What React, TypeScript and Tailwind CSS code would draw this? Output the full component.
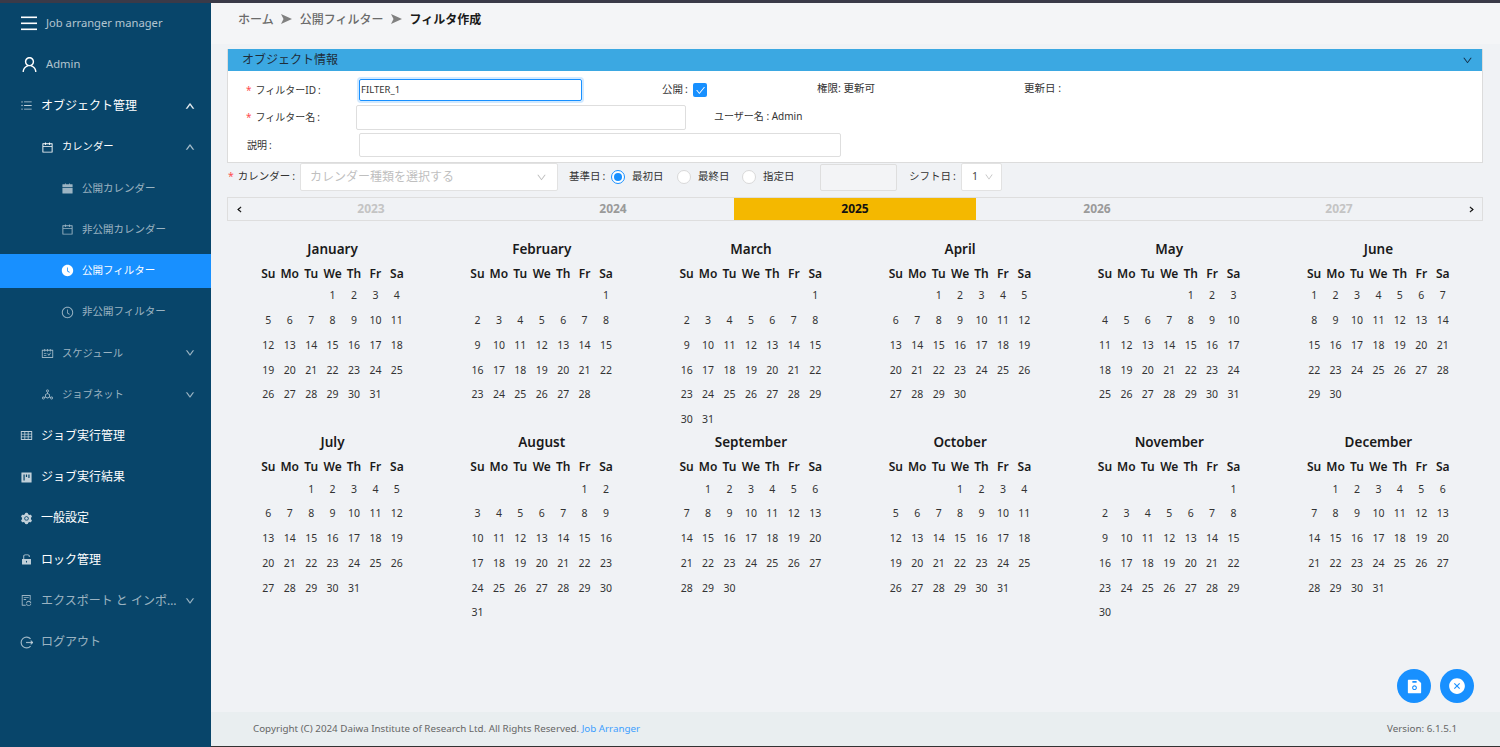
import React from "react";
import {
  AiOutlineUser, AiOutlineUnorderedList, AiOutlineCalendar, AiFillCalendar,
  AiFillClockCircle, AiOutlineClockCircle, AiOutlineSchedule, AiOutlineDeploymentUnit, AiOutlineTable,
  AiFillProject, AiFillSetting, AiFillUnlock, AiOutlineFileSync, AiOutlineUp, AiOutlineDown,
  AiFillSave, AiFillCloseCircle, AiOutlineCheck, AiOutlineLeft, AiOutlineRight,
} from "react-icons/ai";

const font = { fontFamily: '"Noto Sans", "Noto Sans CJK JP", sans-serif' };

function LogoutIcon({ className }: { className?: string }) {
  return (
    <svg viewBox="0 0 14 14" className={className} fill="none" stroke="currentColor" strokeWidth="1.3">
      <path d="M11.4 3.2 A5.8 5.8 0 1 0 11.4 10.8" />
      <path d="M6.5 7 H13.5" />
      <path d="M11.5 5 L13.5 7 L11.5 9" />
    </svg>
  );
}

type Item = {
  label: string; Icon: React.ComponentType<{ className?: string }>; level: 0 | 1 | 2;
  bright?: boolean; active?: boolean; chevron?: "up" | "down"; chevBright?: boolean;
};

const items: Item[] = [
  { label: "オブジェクト管理", Icon: AiOutlineUnorderedList, level: 0, bright: true, chevron: "up", chevBright: true },
  { label: "カレンダー", Icon: AiOutlineCalendar, level: 1, bright: true, chevron: "up" },
  { label: "公開カレンダー", Icon: AiFillCalendar, level: 2 },
  { label: "非公開カレンダー", Icon: AiOutlineCalendar, level: 2 },
  { label: "公開フィルター", Icon: AiFillClockCircle, level: 2, active: true, bright: true },
  { label: "非公開フィルター", Icon: AiOutlineClockCircle, level: 2 },
  { label: "スケジュール", Icon: AiOutlineSchedule, level: 1, chevron: "down" },
  { label: "ジョブネット", Icon: AiOutlineDeploymentUnit, level: 1, chevron: "down" },
  { label: "ジョブ実行管理", Icon: AiOutlineTable, level: 0, bright: true },
  { label: "ジョブ実行結果", Icon: AiFillProject, level: 0, bright: true },
  { label: "一般設定", Icon: AiFillSetting, level: 0, bright: true },
  { label: "ロック管理", Icon: AiFillUnlock, level: 0, bright: true },
  { label: "エクスポート と インポート", Icon: AiOutlineFileSync, level: 0, chevron: "down" },
  { label: "ログアウト", Icon: LogoutIcon, level: 0 },
];

function SideRow({ it }: { it: Item }) {
  const pad = it.level === 0 ? "pl-[20px]" : it.level === 1 ? "pl-[41px]" : "pl-[61px]";
  const size = it.level === 0 ? "text-[12px]" : it.level === 1 ? "text-[10.3px]" : "text-[10.5px]";
  const color = it.bright ? "text-white" : "text-white/60";
  return (
    <div className="h-[41.25px] flex items-center">
      <div className={`h-[34px] w-full flex items-center gap-[8px] pr-[16px] ${pad} ${it.active ? "bg-[#1890ff]" : ""}`}>
        <it.Icon className={`w-[13px] h-[13px] shrink-0 ${it.level === 0 && it.bright ? "text-white/75" : color}`} />
        <span className={`flex-1 min-w-0 truncate ${size} ${color}`}>{it.label}</span>
        {it.chevron === "up" && <AiOutlineUp className={`w-[10px] h-[10px] shrink-0 stroke-current stroke-[60] ${it.chevBright ? "text-white" : "text-white/60"}`} />}
        {it.chevron === "down" && <AiOutlineDown className="w-[10px] h-[10px] shrink-0 stroke-current stroke-[40] text-white/60" />}
      </div>
    </div>
  );
}

function Sidebar() {
  return (
    <aside className="w-[211px] shrink-0 bg-[#08456a]">
      <div className="h-[41px] flex items-center pl-[21px] gap-[9px] text-white/70">
        <svg width="16" height="15" viewBox="0 0 16 15" className="shrink-0 text-white" fill="currentColor">
          <rect x="0" y="0.5" width="16" height="1.6" />
          <rect x="0" y="6.5" width="16" height="1.6" />
          <rect x="0" y="12.5" width="16" height="1.6" />
        </svg>
        <span className="text-[11.2px]">Job arranger manager</span>
      </div>
      <div className="h-[41.25px] flex items-center pl-[20px] gap-[7px] text-white/70">
        <AiOutlineUser className="w-[19px] h-[19px] text-white" />
        <span className="text-[11.2px]">Admin</span>
      </div>
      {items.map((it) => <SideRow key={it.label} it={it} />)}
    </aside>
  );
}

const wk = ["Su", "Mo", "Tu", "We", "Th", "Fr", "Sa"];
const months = ["January", "February", "March", "April", "May", "June", "July", "August", "September", "October", "November", "December"];

function Month({ m }: { m: number }) {
  const first = new Date(2025, m, 1).getDay();
  const n = new Date(2025, m + 1, 0).getDate();
  const cells: (number | null)[] = [...Array(first).fill(null), ...Array.from({ length: n }, (_, i) => i + 1)];
  return (
    <div className="w-[209.2px]">
      <div className="h-[22px] mt-[1px] flex items-center justify-center text-[13.5px] font-semibold text-[#1a1a1a]">{months[m]}</div>
      <div className="grid grid-cols-7 w-[150px] mx-auto mt-[3px] h-[21px] items-center text-center text-[12px] font-semibold text-[#1a1a1a]">
        {wk.map((d) => <div key={d}>{d}</div>)}
      </div>
      <div className="grid grid-cols-7 w-[150px] mx-auto auto-rows-[24.7px] items-center text-center text-[10.5px] text-[#333]">
        {cells.map((c, i) => <div key={i}>{c}</div>)}
      </div>
    </div>
  );
}

function Req() { return <span className="text-[#ff4d4f] mr-[4px]">*</span>; }
function Colon() { return <span className="ml-[2px]">:</span>; }

function Radio({ on, label }: { on?: boolean; label: string }) {
  return (
    <div className="flex items-center gap-[7px]">
      <span className={`w-[14px] h-[14px] rounded-full bg-white border flex items-center justify-center ${on ? "border-[#1890ff]" : "border-[#d9d9d9]"}`}>
        {on && <span className="w-[8px] h-[8px] rounded-full bg-[#1890ff]" />}
      </span>
      <span>{label}</span>
    </div>
  );
}

function Crumb() {
  return (
    <svg width="11" height="10" viewBox="0 0 11 10" className="mt-[3px] shrink-0 text-[#808080]" fill="currentColor">
      <path d="M0 0 L11 5 L0 10 L2.5 5 Z" />
    </svg>
  );
}

function Main() {
  return (
    <main className="flex-1 min-w-0 flex flex-col bg-[#f0f2f5] text-[#333]">
      <div className="h-[41px] bg-[#f4f5f7] pl-[27px] pt-[8px] flex items-start gap-[7.5px] text-[12px] font-medium text-[#6b6b6b]">
        <span>ホーム</span>
        <Crumb />
        <span>公開フィルター</span>
        <Crumb />
        <span className="font-bold text-[#1a1a1a]">フィルタ作成</span>
      </div>

      <div className="flex-1 flex flex-col pl-[16px] pr-[17px] pt-[5px]">
        <section className="border border-[#dcdcdc] border-t-0 bg-white text-[10px]">
          <div className="h-[22px] bg-[#3ba8e2] flex items-center justify-between pl-[14px] pr-[9px] text-[12px] text-[#1f2d3a]">
            <span>オブジェクト情報</span>
            <AiOutlineDown className="w-[11px] h-[11px] text-[#14304a]" />
          </div>
          <div className="h-[91px] pt-[8px] flex flex-col">
            <div className="flex items-center h-[22px]">
              <div className="w-[131px] pl-[18px] shrink-0"><Req />フィルターID<Colon /></div>
              <div className="w-[223px] h-[22px] shrink-0 border border-[#1890ff] rounded-[2px] shadow-[0_0_0_2px_rgba(24,144,255,0.2)] flex items-center pl-[1px] text-[9.5px]">FILTER_1</div>
              <div className="ml-[80px] w-[31px] shrink-0 text-[10.5px]">公開<Colon /></div>
              <span className="w-[14px] h-[14px] shrink-0 rounded-[2px] bg-[#1890ff] flex items-center justify-center">
                <AiOutlineCheck className="w-[11px] h-[11px] text-white" />
              </span>
              <div className="ml-[110px] w-[207px] shrink-0 text-[10.5px] -mt-[2px]">権限: 更新可</div>
              <div className="text-[10.5px] -mt-[2px]">更新日 :</div>
            </div>
            <div className="flex items-center h-[25px] mt-[4px]">
              <div className="w-[128px] pl-[18px] shrink-0"><Req />フィルター名<Colon /></div>
              <div className="w-[330px] h-[25px] shrink-0 border border-[#dedede] rounded-[2px] bg-white" />
              <div className="ml-[28px] -mt-[2px]">ユーザー名 : Admin</div>
            </div>
            <div className="flex items-center h-[24px] mt-[3px]">
              <div className="w-[131px] pl-[19px] shrink-0">説明<Colon /></div>
              <div className="w-[482px] h-[24px] shrink-0 border border-[#dedede] rounded-[2px] bg-white" />
            </div>
          </div>
        </section>

        <div className="h-[28px] flex items-center text-[10.5px]">
          <div className="w-[73px] pl-[1px] shrink-0"><Req />カレンダー<Colon /></div>
          <div className="w-[258px] h-[28px] shrink-0 bg-white border border-[#e2e2e2] rounded-[2px] flex items-center justify-between pl-[9px] pr-[10px] text-[12px] text-[#bfbfbf]">
            <span>カレンダー種類を選択する</span>
            <AiOutlineDown className="w-[11px] h-[11px] text-[#bfbfbf]" />
          </div>
          <div className="ml-[11px] w-[42px] shrink-0">基準日<Colon /></div>
          <div className="w-[66px] shrink-0"><Radio on label="最初日" /></div>
          <div className="w-[65px] shrink-0"><Radio label="最終日" /></div>
          <div className="w-[78px] shrink-0"><Radio label="指定日" /></div>
          <div className="w-[77px] h-[27px] shrink-0 border border-[#dedede] rounded-[2px] bg-[#f3f4f6]" />
          <div className="ml-[12px] w-[52px] shrink-0">シフト日<Colon /></div>
          <div className="w-[41px] h-[28px] shrink-0 bg-white border border-[#e2e2e2] rounded-[2px] flex items-center justify-between pl-[10px] pr-[7px] text-[10.5px] text-[#444]">
            <span>1</span>
            <AiOutlineDown className="w-[10px] h-[10px] text-[#bfbfbf]" />
          </div>
        </div>

        <div className="mt-[6px] h-[24px] border border-[#dedede] flex items-stretch text-[12px] font-bold text-center">
          <div className="w-[22px] flex items-center justify-center"><AiOutlineLeft className="w-[7px] h-[7px] text-black stroke-current stroke-[100]" /></div>
          <div className="flex-1 flex items-center justify-center text-[#c4c4c4]">2023</div>
          <div className="flex-1 flex items-center justify-center text-[#9a9a9a]">2024</div>
          <div className="flex-1 flex items-center justify-center bg-[#f4b800] text-[#111]">2025</div>
          <div className="flex-1 flex items-center justify-center text-[#9a9a9a]">2026</div>
          <div className="flex-1 flex items-center justify-center text-[#c4c4c4]">2027</div>
          <div className="w-[22px] flex items-center justify-center"><AiOutlineRight className="w-[7px] h-[7px] text-black stroke-current stroke-[100]" /></div>
        </div>

        <div className="mt-[16px] ml-[1px] grid grid-cols-6 w-[1255px]">
          {months.map((_, i) => (
            <div key={i} className="h-[193.3px]"><Month m={i} /></div>
          ))}
        </div>

        <div className="flex justify-end gap-[9px] mt-auto mb-[9px] mr-[9px]">
          <button className="w-[34px] h-[34px] rounded-full bg-[#1890ff] flex items-center justify-center">
            <AiFillSave className="w-[17px] h-[17px] text-white" />
          </button>
          <button className="w-[34px] h-[34px] rounded-full bg-[#1890ff] flex items-center justify-center">
            <AiFillCloseCircle className="w-[18px] h-[18px] text-white" />
          </button>
        </div>
      </div>

      <footer className="h-[35px] bg-[#e9eef0] border-b border-[#333] pt-[1px] flex items-center justify-between pl-[42px] pr-[43px] text-[9.8px] text-[#666]">
        <span>Copyright (C) 2024 Daiwa Institute of Research Ltd. All Rights Reserved. <span className="text-[#40a0ff]">Job Arranger</span></span>
        <span>Version: 6.1.5.1</span>
      </footer>
    </main>
  );
}

export default function App() {
  return (
    <div className="w-[1500px] h-[747px] overflow-hidden flex flex-col" style={font}>
      <div className="h-[3px] bg-[#3a3a48] shrink-0" />
      <div className="flex-1 min-h-0 flex">
        <Sidebar />
        <Main />
      </div>
    </div>
  );
}
